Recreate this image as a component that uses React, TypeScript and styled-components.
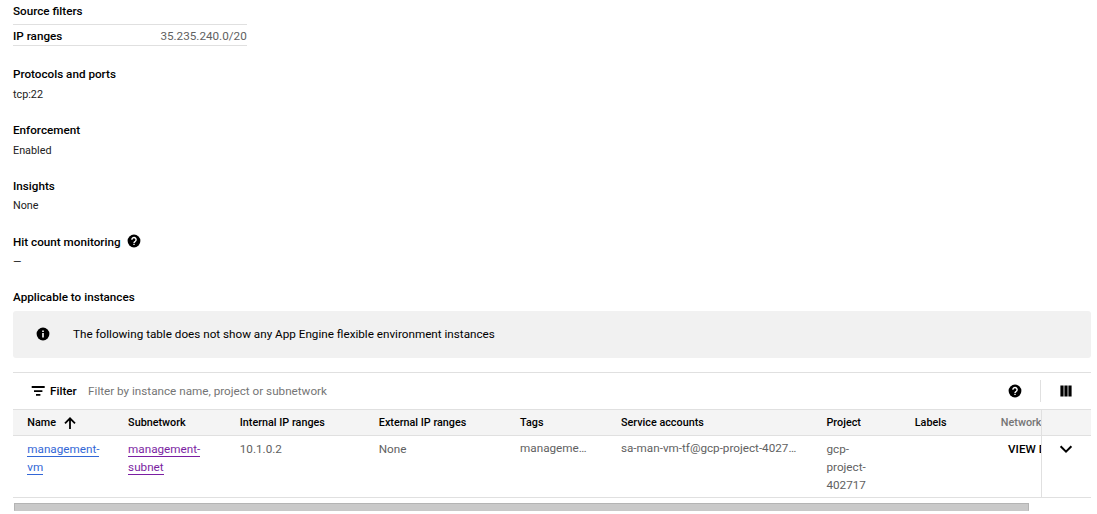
import React from 'react';
import styled, { createGlobalStyle } from 'styled-components';

const GlobalStyle = createGlobalStyle`
  *, *::before, *::after { box-sizing: border-box; }
  body {
    margin: 0;
    overflow: hidden;
    background: #fff;
    color: #000;
    font-family: Roboto, "Liberation Sans", sans-serif;
    font-size: 11.7px;
  }
`;

const Page = styled.main`
  display: flex;
  flex-direction: column;
  height: 514px;
  padding: 2px 6px 0 13px;
  overflow: hidden;
`;

const Section = styled.section<{ $height: number }>`
  flex: none;
  height: ${(p) => p.$height}px;
`;

const Title = styled.h3`
  display: flex;
  align-items: center;
  gap: 5px;
  height: 18px;
  margin: 0;
  font-size: 11.7px;
  font-weight: 500;
  line-height: 18px;
  white-space: nowrap;

  svg { margin-bottom: 2px; }
`;

const Value = styled.p<{ $gap?: number }>`
  margin: ${(p) => p.$gap ?? 2}px 0 0;
  font-size: 10.8px;
  line-height: 18px;
  color: #212121;
`;

const RangeRow = styled.div`
  display: flex;
  justify-content: space-between;
  width: 234px;
  height: 22px;
  margin-top: 4px;
  border-top: 1px solid #e0e0e0;
  border-bottom: 1px solid #e0e0e0;
  line-height: 22px;
`;

const RangeName = styled.span`
  font-weight: 500;
`;

const RangeValue = styled.span`
  margin-right: 0.3px;
  color: #616161;
`;

const Icon = styled.svg<{ $size?: number }>`
  display: block;
  flex: none;
  width: ${(p) => p.$size ?? 16}px;
  height: ${(p) => p.$size ?? 16}px;
  fill: currentColor;
`;

const Notice = styled.div`
  display: flex;
  flex: none;
  align-items: center;
  gap: 22px;
  height: 47px;
  padding: 0 0 1px 22px;
  border-radius: 3px;
  background: #f1f1f1;
`;

const Panel = styled.div`
  display: flex;
  flex: none;
  flex-direction: column;
  margin-top: 14px;
  border-top: 1px solid #e0e0e0;
`;

const Toolbar = styled.div`
  display: flex;
  align-items: center;
  height: 36px;
  padding: 0 17px;
`;

const FilterLabel = styled.span`
  margin-left: 4px;
  font-weight: 500;
`;

const FilterHint = styled.span`
  flex: 1;
  margin-left: 11.4px;
  color: #757575;
`;

const Divider = styled.span`
  width: 1px;
  height: 22px;
  margin: 0 17px;
  background: #e0e0e0;
`;

const Row = styled.div<{ $header?: boolean }>`
  display: flex;
  height: ${(p) => (p.$header ? 27 : 62)}px;
  border-top: ${(p) => (p.$header ? '1px solid #e0e0e0' : '0')};
  border-bottom: 1px solid #e0e0e0;
  background: ${(p) => (p.$header ? '#f4f4f4' : '#fff')};
`;

const Cells = styled.div`
  display: grid;
  flex: 1;
  min-width: 0;
  overflow: hidden;
  grid-template-columns: 100.8px 111.7px 139px 141.3px 100.9px 205.5px 88.3px 86.1px 130px;
`;

const HeadCell = styled.div<{ $muted?: boolean }>`
  display: flex;
  align-items: center;
  gap: 6px;
  padding-left: 14.3px;
  font-size: 10.8px;
  font-weight: 500;
  white-space: nowrap;
  color: ${(p) => (p.$muted ? '#757575' : '#000')};
`;

const Cell = styled.div<{ $top?: number }>`
  padding: ${(p) => p.$top ?? 4}px 0 0 14.3px;
  line-height: 18px;
  color: #616161;
  white-space: nowrap;
`;

const Link = styled.a<{ $visited?: boolean }>`
  border-bottom: 1px solid currentColor;
  color: ${(p) => (p.$visited ? '#7b1fa2' : '#3367d6')};
  line-height: 18px;
`;

const ViewButton = styled.span`
  padding-left: 7.2px;
  color: #000;
  font-weight: 500;
`;

const StickyCell = styled.div`
  display: flex;
  flex: none;
  justify-content: center;
  width: 50px;
  padding: 4px 1px 0 0;
  border-left: 1px solid #e0e0e0;
`;

const Scrollbar = styled.div`
  width: 1015px;
  height: 8px;
  margin: 5px 0 0 1px;
  border: 1px solid #b4b4b4;
  border-bottom-color: #c8c8c8;
  background: #c9c9c9;
`;

const HelpIcon = () => (
  <Icon viewBox="0 0 16 16">
    <circle cx="8" cy="8" r="6.4" />
    <path d="M5.9 6.7a2.1 2.1 0 1 1 3.4 1.6C8.5 8.9 8 9.1 8 9.9" fill="none" stroke="#fff" strokeWidth="1.4" />
    <path d="M7.3 10.7h1.4v1.4H7.3z" fill="#fff" />
  </Icon>
);

const InfoIcon = () => (
  <Icon viewBox="0 0 16 16">
    <circle cx="8" cy="8" r="6.4" />
    <path d="M7.2 4.6h1.6v1.5H7.2zM7.2 7h1.6v4.4H7.2z" fill="#fff" />
  </Icon>
);

const FilterIcon = () => (
  <Icon viewBox="0 0 16 16">
    <path d="M1.7 3.1h13V5h-13zM4 7.2h8.4v1.7H4zM6 10.9h4.4v1.8H6z" />
  </Icon>
);

const ArrowUpIcon = () => (
  <Icon viewBox="0 0 16 16">
    <path d="M8 14V3.4M3 8.3l5-5 5 5" fill="none" stroke="currentColor" strokeWidth="1.8" />
  </Icon>
);

const ColumnsIcon = () => (
  <Icon viewBox="0 0 16 16">
    <path d="M2.4 2.6h3.2v10.8H2.4zM6.4 2.6h3.2v10.8H6.4zM10.4 2.6h3.2v10.8h-3.2z" />
  </Icon>
);

const ChevronIcon = () => (
  <Icon viewBox="0 0 18 18" $size={18}>
    <path d="M3.6 6.3 9 11.7l5.4-5.4" fill="none" stroke="currentColor" strokeWidth="2" />
  </Icon>
);

export default function App() {
  return (
    <>
      <GlobalStyle />
      <Page>
        <Section $height={63}>
          <Title>Source filters</Title>
          <RangeRow>
            <RangeName>IP ranges</RangeName>
            <RangeValue>35.235.240.0/20</RangeValue>
          </RangeRow>
        </Section>
        <Section $height={56}>
          <Title>Protocols and ports</Title>
          <Value $gap={3}>tcp:22</Value>
        </Section>
        <Section $height={56}>
          <Title>Enforcement</Title>
          <Value $gap={3}>Enabled</Value>
        </Section>
        <Section $height={56}>
          <Title>Insights</Title>
          <Value>None</Value>
        </Section>
        <Section $height={55}>
          <Title>
            Hit count monitoring <HelpIcon />
          </Title>
          <Value>—</Value>
        </Section>
        <Section $height={23}>
          <Title>Applicable to instances</Title>
        </Section>
        <Notice>
          <InfoIcon />
          <span>The following table does not show any App Engine flexible environment instances</span>
        </Notice>
        <Panel>
          <Toolbar>
            <FilterIcon />
            <FilterLabel>Filter</FilterLabel>
            <FilterHint>Filter by instance name, project or subnetwork</FilterHint>
            <HelpIcon />
            <Divider />
            <ColumnsIcon />
          </Toolbar>
          <Row $header>
            <Cells>
              <HeadCell>
                Name <ArrowUpIcon />
              </HeadCell>
              <HeadCell>Subnetwork</HeadCell>
              <HeadCell>Internal IP ranges</HeadCell>
              <HeadCell>External IP ranges</HeadCell>
              <HeadCell>Tags</HeadCell>
              <HeadCell>Service accounts</HeadCell>
              <HeadCell>Project</HeadCell>
              <HeadCell>Labels</HeadCell>
              <HeadCell $muted>Network</HeadCell>
            </Cells>
            <StickyCell />
          </Row>
          <Row>
            <Cells>
              <Cell>
                <Link>management-<br />vm</Link>
              </Cell>
              <Cell>
                <Link $visited>management-<br />subnet</Link>
              </Cell>
              <Cell>10.1.0.2</Cell>
              <Cell>None</Cell>
              <Cell $top={3}>manageme…</Cell>
              <Cell $top={3}>sa-man-vm-tf@gcp-project-4027…</Cell>
              <Cell>gcp-<br />project-<br />402717</Cell>
              <Cell />
              <Cell>
                <ViewButton>VIEW DETAILS</ViewButton>
              </Cell>
            </Cells>
            <StickyCell>
              <ChevronIcon />
            </StickyCell>
          </Row>
        </Panel>
        <Scrollbar />
      </Page>
    </>
  );
}
